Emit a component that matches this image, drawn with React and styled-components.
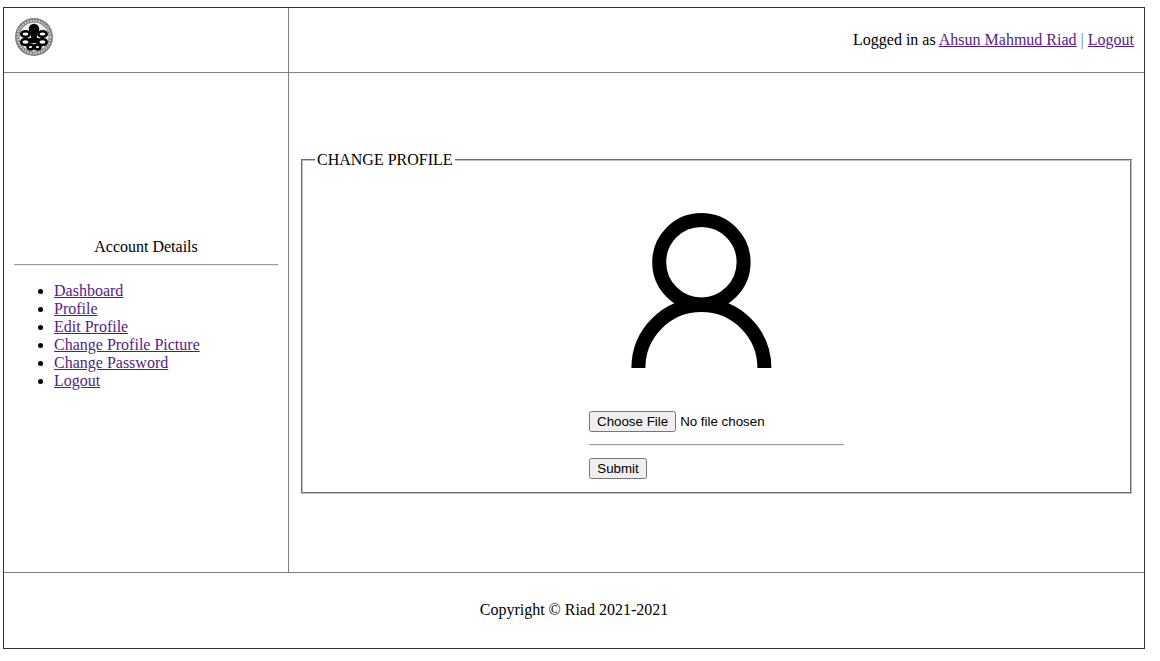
import React from 'react';
import styled, { createGlobalStyle } from 'styled-components';

const GlobalStyle = createGlobalStyle`
  html, body {
    margin: 0;
    padding: 0;
    background: #fff;
  }
  body {
    font-family: "Liberation Serif", "Times New Roman", serif;
    font-size: 16px;
    color: #000;
  }
`;

const Page = styled.div`
  box-sizing: border-box;
  width: 1142px;
  height: 642px;
  margin: 7px 0 0 3px;
  border: 1px solid #333;
  display: grid;
  grid-template-columns: 285px 1fr;
  grid-template-rows: 65px 499px 1fr;
`;

const LogoCell = styled.div`
  border-right: 1px solid #808080;
  border-bottom: 1px solid #808080;
  display: flex;
  align-items: center;
  padding: 0 0 6px 11px;
`;

const TopCell = styled.div`
  border-bottom: 1px solid #808080;
  display: flex;
  align-items: center;
  justify-content: flex-end;
  padding-right: 10px;
`;

const Link = styled.a`
  color: #551a8b;
  text-decoration: underline;
`;

const Pipe = styled.span`
  color: #5a7fd0;
`;

const Sidebar = styled.aside`
  border-right: 1px solid #808080;
  padding: 165px 10px 0 10px;
`;

const SideTitle = styled.div`
  text-align: center;
  line-height: 18px;
`;

const Rule = styled.hr`
  margin: ${(p) => p.$gap || 8}px 0 0;
  border: 0;
  border-top: 1px solid #999;
  border-bottom: 1px solid #eee;
`;

const NavList = styled.ul`
  margin: 16px 0 0;
  padding-left: 40px;
  line-height: 18px;
`;

const Main = styled.main`
  padding: 78px 12px 0 12px;
`;

const Fieldset = styled.fieldset`
  box-sizing: border-box;
  margin: 0;
  padding: 0;
  height: 343px;
  border: 2px groove #c0c0c0;
  display: flex;
  flex-direction: column;
  align-items: center;
`;

const Legend = styled.legend`
  padding: 0 2px;
  margin-left: 12px;
  line-height: 18px;
`;

const Form = styled.form`
  width: 255px;
  margin: 0 auto;
`;

const Avatar = styled.svg`
  display: block;
  width: 141px;
  height: 156px;
  margin: 44px 0 0 42px;
`;

const FileInput = styled.input`
  display: block;
  margin-top: 42px;
  font-family: "Liberation Sans", Arial, sans-serif;
  font-size: 13.333px;
`;

const SubmitButton = styled.button`
  display: block;
  width: 58px;
  margin-top: 12px;
  padding: 1px 0;
  font-family: "Liberation Sans", Arial, sans-serif;
  font-size: 13.333px;
`;

const Footer = styled.footer`
  grid-column: 1 / 3;
  border-top: 1px solid #808080;
  display: flex;
  align-items: center;
  justify-content: center;
  padding-bottom: 2px;
`;

const Logo = () => (
  <svg width="38" height="38" viewBox="0 0 38 38">
    <circle cx="19" cy="19" r="19" fill="#7d7d7d" />
    <circle cx="19" cy="19" r="16.4" fill="none" stroke="#cfcfcf" strokeWidth="2" strokeDasharray="1.6 1.2" />
    <circle cx="19" cy="19" r="14.6" fill="#eee" />
    <circle cx="19" cy="11" r="5.2" fill="#000" />
    <rect x="16" y="14" width="6" height="9" fill="#000" />
    <g fill="#fff" stroke="#000" strokeWidth="2.6">
      <ellipse cx="10.5" cy="16" rx="4.2" ry="2.8" />
      <ellipse cx="27.5" cy="16" rx="4.2" ry="2.8" />
      <ellipse cx="10.5" cy="24" rx="4.2" ry="3" />
      <ellipse cx="27.5" cy="24" rx="4.2" ry="3" />
      <ellipse cx="15.5" cy="29" rx="3" ry="2.4" />
      <ellipse cx="22.5" cy="29" rx="3" ry="2.4" />
    </g>
    <path d="M14 20h10v5h-10z" fill="#000" />
  </svg>
);

const navItems = ['Dashboard', 'Profile', 'Edit Profile', 'Change Profile Picture', 'Change Password', 'Logout'];

export default function App() {
  return (
    <>
      <GlobalStyle />
      <Page>
        <LogoCell>
          <Logo />
        </LogoCell>
        <TopCell>
          <span>
            Logged in as <Link href="#">Ahsun Mahmud Riad</Link> <Pipe>|</Pipe> <Link href="#">Logout</Link>
          </span>
        </TopCell>
        <Sidebar>
          <SideTitle>Account Details</SideTitle>
          <Rule />
          <NavList>
            {navItems.map((item) => (
              <li key={item}>
                <Link href="#">{item}</Link>
              </li>
            ))}
          </NavList>
        </Sidebar>
        <Main>
          <Fieldset>
            <Legend>CHANGE PROFILE</Legend>
            <Form onSubmit={(e) => e.preventDefault()}>
              <Avatar viewBox="0 0 141 156">
                <circle cx="70.4" cy="49.2" r="42.2" fill="none" stroke="#000" strokeWidth="14" />
                <path d="M7.4 155a63 63 0 0 1 126 0" fill="none" stroke="#000" strokeWidth="14" />
              </Avatar>
              <FileInput type="file" />
              <Rule $gap={12} />
              <SubmitButton type="submit">Submit</SubmitButton>
            </Form>
          </Fieldset>
        </Main>
        <Footer>Copyright © Riad 2021-2021</Footer>
      </Page>
    </>
  );
}
